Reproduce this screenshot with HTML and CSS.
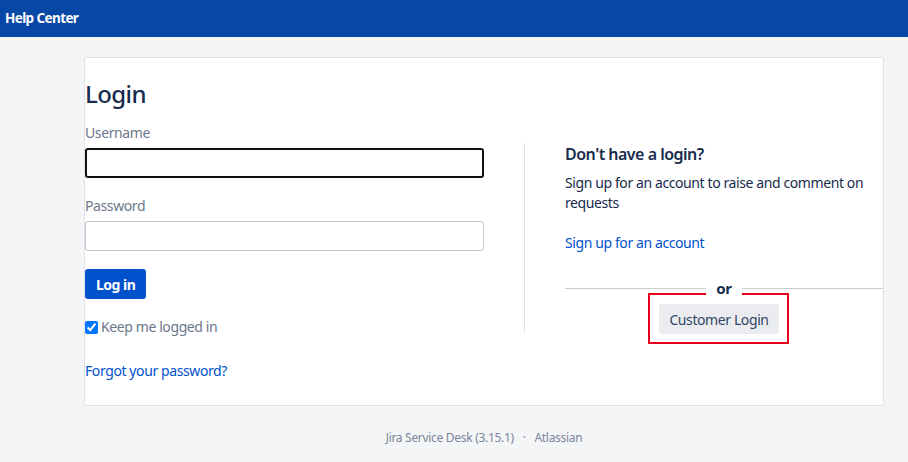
FILE: index.html
```html
<!DOCTYPE html>
<html lang="en">
<head>
    <meta charset="UTF-8">
    <title>Help Center - Login</title>
    <link rel="stylesheet" href="styles.css">
</head>
<body>
    <!-- Barra superior -->
    <header class="topbar">Help Center</header>

    <main class="page">
        <div class="card">
            <h1>Login</h1>
            <div class="cols">
                <form class="login-form" onsubmit="return false;">
                    <label for="username">Username</label>
                    <input type="text" id="username" class="field focused">
                    <label for="password">Password</label>
                    <input type="password" id="password" class="field">
                    <div class="actions">
                        <button class="btn-primary">Log in</button>
                    </div>
                    <div class="remember">
                        <input type="checkbox" id="remember" checked>
                        <span>Keep me logged in</span>
                    </div>
                    <a href="#" class="forgot">Forgot your password?</a>
                </form>

                <div class="signup">
                    <h3>Don't have a login?</h3>
                    <p>Sign up for an account to raise and comment on requests</p>
                    <a href="#" class="signup-link">Sign up for an account</a>
                    <div class="divider"><span>or</span></div>
                    <div class="sso">
                        <div class="highlight">
                            <button class="btn-default">Customer Login</button>
                        </div>
                    </div>
                </div>
            </div>
        </div>

        <footer class="footer">
            <span>Jira Service Desk (3.15.1)</span>
            <span class="dot">·</span>
            <span>Atlassian</span>
        </footer>
    </main>
</body>
</html>
```

FILE: styles.css
```css
/* Geral */
body {
    margin: 0;
    font-family: 'Segoe UI', 'Noto Sans', sans-serif;
    font-size: 14px;
    line-height: 20px;
    letter-spacing: -0.4px;
    background-color: #f4f5f7;
    color: #172b4d;
}

.topbar {
    background-color: #0747a6;
    color: #fff;
    font-weight: bold;
    font-size: 13.5px;
    letter-spacing: -0.6px;
    height: 37px;
    line-height: 36px;
    padding-left: 5px;
    box-sizing: border-box;
}

.page {
    width: 800px;
    margin-left: 84px;
    padding-top: 20px;
}

/* Cartão de login */
.card {
    background-color: #fff;
    border: 1px solid #dfe1e6;
    border-radius: 3px;
    padding: 22px 0 24px 0;
}

.card h1 {
    font-size: 24px;
    line-height: 28px;
    font-weight: 500;
    letter-spacing: -0.6px;
    margin: 0 0 15px 0;
}

.cols {
    display: flex;
    align-items: flex-start;
}

/* Formulário */
.login-form {
    width: 399px;
    margin-right: 40px;
    display: flex;
    flex-direction: column;
}

.login-form label {
    color: #6b778c;
    margin-bottom: 5px;
}

.field {
    height: 30px;
    box-sizing: border-box;
    border: 1px solid #c1c7d0;
    border-radius: 3px;
    margin: 0 0 18px 0;
    font-size: 14px;
    padding: 4px 6px;
    outline: none;
}

.field.focused {
    border: 2px solid #111;
}

.actions {
    margin-bottom: 18px;
}

.btn-primary {
    background-color: #0052cc;
    color: #fff;
    font-family: inherit;
    font-weight: bold;
    font-size: 14px;
    letter-spacing: -0.5px;
    height: 30px;
    padding: 0 11px;
    border: none;
    border-radius: 3px;
}

.remember {
    display: flex;
    align-items: center;
    color: #6b778c;
    margin-bottom: 24px;
}

.remember input {
    margin: 0 3px 0 0;
    width: 13px;
    height: 13px;
}

.forgot {
    color: #0052cc;
    text-decoration: none;
}

/* Coluna de cadastro */
.signup {
    flex: 1;
    border-left: 1px solid #dfe1e6;
    margin-top: 20px;
    padding-left: 40px;
    height: 190px;
}

.signup h3 {
    font-size: 16px;
    line-height: 20px;
    font-weight: 600;
    letter-spacing: -0.5px;
    margin: 1px 0 9px 0;
}

.signup p {
    margin: 0 0 20px 0;
}

.signup-link {
    color: #0052cc;
    text-decoration: none;
}

.divider {
    border-top: 1px solid #ccc;
    margin-top: 35px;
    height: 0;
    text-align: center;
}

.divider span {
    position: relative;
    top: -11px;
    background-color: #fff;
    padding: 0 10px;
    font-weight: bold;
    font-size: 15px;
}

.sso {
    display: flex;
    justify-content: center;
    margin-top: 4px;
}

.highlight {
    border: 2px solid #e8001c;
    padding: 9px 8px 8px 9px;
    margin-right: 11px;
}

.btn-default {
    display: block;
    background-color: #ebecf0;
    color: #344563;
    font-family: inherit;
    font-size: 14px;
    letter-spacing: -0.4px;
    height: 30px;
    width: 120px;
    border: none;
    border-radius: 3px;
}

/* Rodapé */
.footer {
    text-align: center;
    color: #7a869a;
    font-size: 12px;
    letter-spacing: -0.3px;
    margin-top: 22px;
}

.footer .dot {
    margin: 0 6px;
}
```
